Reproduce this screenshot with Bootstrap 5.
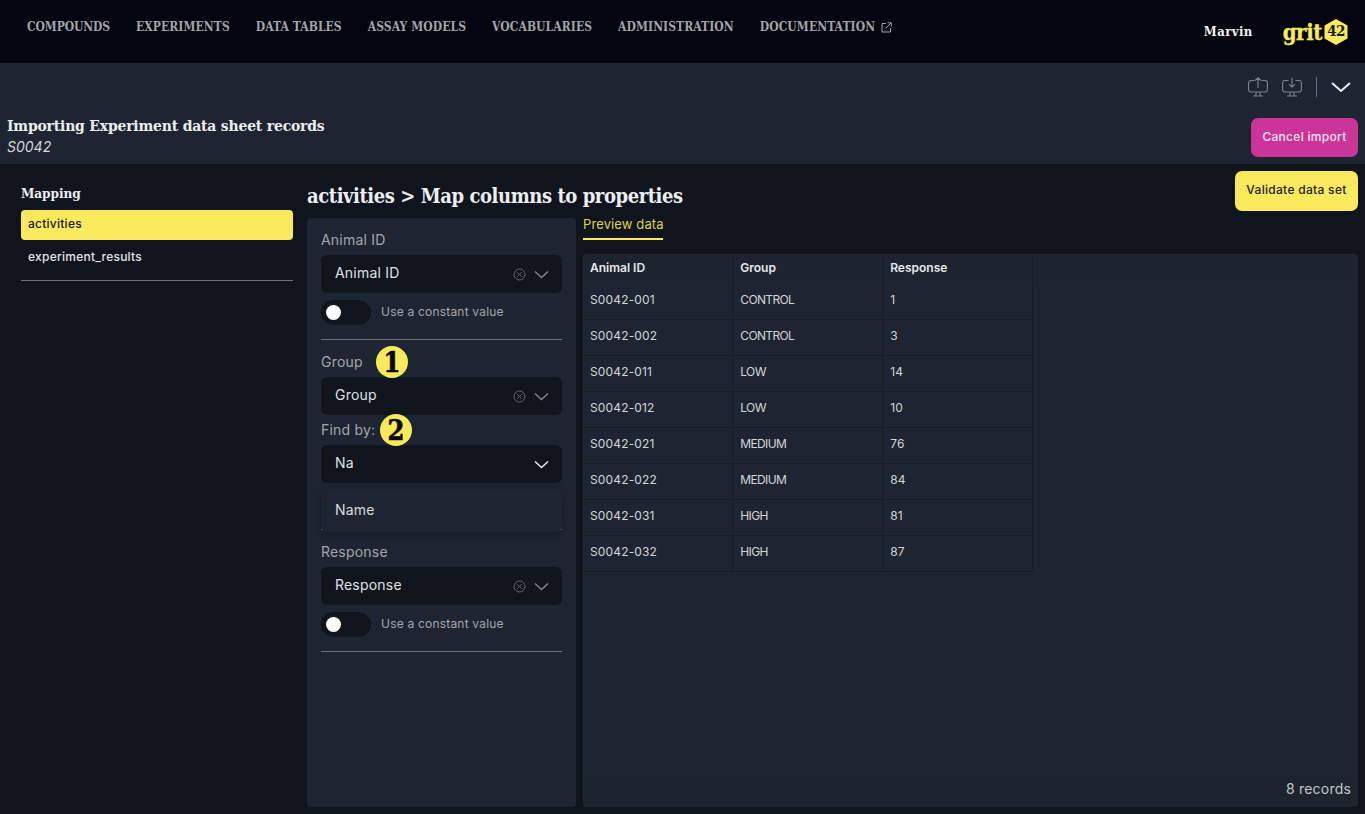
<!DOCTYPE html>
<html lang="en">
<head>
  <meta charset="UTF-8">
  <title>grit42 - Importing records</title>
  <link href="https://cdn.jsdelivr.net/npm/bootstrap@5.3.0/dist/css/bootstrap.min.css" rel="stylesheet">
  <style>
    html, body { height: 100%; }
    body {
      background: #10141c;
      color: #e6e8ec;
      font-family: "Inter", "Liberation Sans", sans-serif;
      font-size: 14px;
      overflow: hidden;
    }
    .serif-face { font-family: "DejaVu Serif", "Liberation Serif", serif; font-weight: 700; font-stretch: condensed; }

    /* top navigation */
    .top-bar { height: 63px; background: #03040f; padding: 0 17px 9px 27px; }
    .top-bar .nav { gap: 26px; }
    .top-link {
      color: #a3a4a8; font-size: 12px; letter-spacing: .08px; text-decoration: none;
      display: flex; align-items: center; gap: 6px;
    }
    .top-link:first-child { letter-spacing: -.1px; }
    .user-box { padding-top: 9px; }
    .user-name { color: #f2f2f2; font-size: 13px; letter-spacing: .4px; margin-right: 30px; }
    .brand-mark { display: flex; align-items: center; color: #f9e95c; }
    .brand-mark .grit-word { font-size: 22px; line-height: 1; letter-spacing: -.4px; margin-right: 2px; -webkit-text-stroke: .3px #f9e95c; }
    .brand-hex { position: relative; width: 24px; height: 26px; display: block; }
    .brand-hex svg { display: block; }
    .brand-hex span {
      position: absolute; inset: 0; display: flex; align-items: center; justify-content: center;
      color: #1a1c20; font-size: 15px; letter-spacing: -.6px;
    }

    /* page header */
    .page-head { height: 101px; background: #1e2532; padding: 0 7px 7px 7px; }
    .head-tools { height: 47px; padding-right: 7px; gap: 14px; }
    .head-sep { width: 1px; height: 20px; background: #6d7179; }
    .head-title { font-size: 15.500px; line-height: 20px; letter-spacing: -.18px; color: #eceef0; }
    .head-sub { font-size: 14px; line-height: 22px; font-style: italic; color: #d5d7db; }
    .head-text { padding-top: 6px; }
    .btn-cancel, .btn-cancel:hover {
      background: #cb3499; color: #f7e6f2; border: 0; border-radius: 7px; margin-top: 8px;
      font-size: 12px; font-weight: 500; letter-spacing: .3px; width: 107px; height: 39px; padding: 0 0 2px;
    }
    .btn-validate, .btn-validate:hover {
      background: #f9e95c; color: #1b1d21; border: 0; border-radius: 7px;
      font-size: 12px; font-weight: 500; letter-spacing: .3px; width: 123px; height: 40px; padding: 0 0 2px;
    }

    /* main area */
    .work-area { height: 650px; padding: 7px 7px 7px 21px; gap: 14px; }
    .side-col { width: 272px; flex: none; }
    .side-title { font-size: 13.500px; line-height: 20px; margin: 12px 0 7px; color: #eceef0; letter-spacing: -.1px; }
    .side-list .list-group-item {
      background: transparent; border: 0; color: #e2e4e8; font-size: 12px; font-weight: 500;
      padding: 0 7px; height: 30px; line-height: 30px; border-radius: 4px; letter-spacing: .25px;
    }
    .side-list .list-group-item.active { background: #f9e95c; color: #17191d; line-height: 28px; }
    .side-list .list-group-item + .list-group-item { margin-top: 2px; }
    .side-rule { border: 0; border-top: 1px solid #6d7179; opacity: 1; margin: 8px 0 0; }

    .main-col { min-width: 0; }
    .main-top { height: 47px; }
    .main-heading { font-size: 20px; line-height: 26px; letter-spacing: -.43px; margin: 12px 0 0; color: #eceef0; }
    .main-body { height: 589px; gap: 7px; margin-top: 0; }

    /* mapping form */
    .map-panel { width: 269px; flex: none; background: #1e2532; border-radius: 4px; padding: 14px; position: relative; }
    .map-label { font-size: 14px; line-height: 15px; height: 17px; color: #a2a5ab; margin-bottom: 6px; letter-spacing: .2px; position: relative; }
    .pick-box {
      height: 38px; background: #10141c; border-radius: 6px; padding: 0 13px 0 14px; color: #dfe1e5;
      letter-spacing: .2px; font-size: 14px;
    }
    .pick-box .pick-val { flex: 1; padding-bottom: 3px; }
    .switch-row { height: 25px; margin-top: 7px; gap: 10px; color: #a2a5ab; font-size: 12px; letter-spacing: .2px; }
    .switch-row .switch-text { padding-bottom: 2px; }
    .switch-track { width: 50px; height: 25px; background: #10141c; border-radius: 13px; padding: 5px 5px; }
    .switch-knob { width: 15px; height: 15px; background: #fff; border-radius: 50%; display: block; }
    .map-rule { border: 0; border-top: 1px solid #6d7179; opacity: 1; margin: 14px 0 14px; }
    .find-label { margin-top: 7px; }
    .step-dot {
      position: absolute; width: 32px; height: 32px; border-radius: 50%; background: #f9e95c; color: #0a0a0a;
      display: flex; align-items: center; justify-content: center; font-size: 27px; line-height: 1; top: -8px;
      letter-spacing: 0; -webkit-text-stroke: .6px #0a0a0a;
    }
    .pick-menu {
      position: absolute; left: 14px; right: 14px; top: 272px; height: 42px; background: #1e2532;
      border-radius: 6px; box-shadow: 0 2px 8px rgba(0,0,0,.3); padding: 0 14px 3px; display: flex; align-items: center;
      color: #d8dade; letter-spacing: .2px;
    }

    /* preview */
    .preview-col { min-width: 0; }
    .preview-tabs { height: 29px; margin-top: -7px; margin-bottom: 14px; }
    .preview-tab {
      color: #ddd04f; font-size: 13px; letter-spacing: .12px; line-height: 27px; padding: 0; height: 29px;
      border-bottom: 2px solid #f9e95c; text-decoration: none; display: block; width: 80px; white-space: nowrap;
    }
    .data-panel { background: #1e2532; border-radius: 4px; overflow: hidden; position: relative; }
    .data-wrap { flex: 1; }
    .data-grid { width: 450px; margin: 0; table-layout: fixed; --bs-table-bg: transparent; --bs-table-color: #d3d5d9; }
    .data-grid th, .data-grid td {
      height: 36px; padding: 0 7px; vertical-align: middle; font-size: 12px; letter-spacing: .15px;
      border-right: 1px solid #171c27; border-bottom: 1px solid #171c27; background: transparent; color: #d3d5d9;
    }
    .data-grid td { padding-bottom: 2px; }
    .data-grid td:nth-child(2) { letter-spacing: -.65px; }
    .data-grid th { height: 29px; font-weight: 600; letter-spacing: 0; color: #e6e8ec; background: #1c2430; border-bottom: 0; padding-bottom: 1px; }
    .head-fill { position: absolute; left: 450px; right: 0; top: 0; height: 29px; background: #1c2430; }
    .data-foot { height: 35px; background: #1c2430; padding: 0 7px 2px; color: #c4c6ca; font-size: 14px; letter-spacing: .2px; }
  </style>
</head>
<body>
  <!-- top nav -->
  <nav class="top-bar d-flex align-items-center justify-content-between">
    <div class="nav serif-face">
      <a class="top-link" href="#">COMPOUNDS</a>
      <a class="top-link" href="#">EXPERIMENTS</a>
      <a class="top-link" href="#">DATA TABLES</a>
      <a class="top-link" href="#">ASSAY MODELS</a>
      <a class="top-link" href="#">VOCABULARIES</a>
      <a class="top-link" href="#">ADMINISTRATION</a>
      <a class="top-link" href="#">DOCUMENTATION
        <svg width="11" height="11" viewBox="0 0 11 11" fill="none" stroke="#a3a4a8" stroke-width="1"><path d="M5 1.500H1v8.500h8.500V6M6.500.8h3.700v3.700M10 1 5 6"/></svg>
      </a>
    </div>
    <div class="user-box d-flex align-items-center">
      <span class="user-name serif-face">Marvin</span>
      <span class="brand-mark serif-face">
        <span class="grit-word">grit</span>
        <span class="brand-hex">
          <svg width="24" height="26" viewBox="0 0 24 26"><path d="M12 0 23.500 6.500v13L12 26 .5 19.500v-13z" fill="#f9e95c"/></svg>
          <span>42</span>
        </span>
      </span>
    </div>
  </nav>

  <!-- page header -->
  <header class="page-head">
    <div class="head-tools d-flex align-items-center justify-content-end">
      <svg width="20" height="20" viewBox="0 0 20 20" fill="none" stroke="#7e838b" stroke-width="1.100"><path d="M6.500 3.500H3Q.6 3.500.6 6v6.500Q.6 15 3 15h14q2.400 0 2.400-2.500V6q0-2.500-2.400-2.500h-3.500M10 11V.8M7 3.500 10 .8l3 2.700M8.300 15l-.6 3.500M11.700 15l.6 3.500M5 19h10"/></svg>
      <svg width="20" height="20" viewBox="0 0 20 20" fill="none" stroke="#7e838b" stroke-width="1.100"><path d="M6.500 3.500H3Q.6 3.500.6 6v6.500Q.6 15 3 15h14q2.400 0 2.400-2.500V6q0-2.500-2.400-2.500h-3.500M10 .8V10M7 7.300 10 10l3-2.700M8.300 15l-.6 3.500M11.700 15l.6 3.500M5 19h10"/></svg>
      <span class="head-sep"></span>
      <svg width="20" height="14" viewBox="0 0 20 14" fill="none" stroke="#eceef0" stroke-width="2"><path d="M1 3l9 8 9-8"/></svg>
    </div>
    <div class="d-flex justify-content-between align-items-start">
      <div class="head-text">
        <div class="head-title serif-face">Importing Experiment data sheet records</div>
        <div class="head-sub">S0042</div>
      </div>
      <button class="btn btn-cancel" type="button">Cancel import</button>
    </div>
  </header>

  <div class="work-area d-flex">
    <aside class="side-col">
      <div class="side-title serif-face">Mapping</div>
      <div class="list-group side-list">
        <a class="list-group-item active" href="#">activities</a>
        <a class="list-group-item" href="#">experiment_results</a>
      </div>
      <hr class="side-rule">
    </aside>

    <main class="main-col flex-grow-1 d-flex flex-column">
      <div class="main-top d-flex justify-content-between align-items-start">
        <h1 class="main-heading serif-face">activities &gt; Map columns to properties</h1>
        <button class="btn btn-validate" type="button">Validate data set</button>
      </div>
      <div class="main-body d-flex">
        <section class="map-panel">
          <div class="map-label">Animal ID</div>
          <div class="pick-box d-flex align-items-center">
            <span class="pick-val">Animal ID</span>
            <svg width="13" height="13" viewBox="0 0 13 13" fill="none" stroke="#666a72"><circle cx="6.500" cy="6.500" r="5.500"/><path d="M4.300 4.300l4.400 4.400M8.700 4.300l-4.400 4.400"/></svg>
            <svg class="ms-2" width="15" height="9" viewBox="0 0 15 9" fill="none" stroke="#80848b" stroke-width="1.500"><path d="M1 1.500l6.500 6 6.500-6"/></svg>
          </div>
          <div class="switch-row d-flex align-items-center">
            <span class="switch-track"><span class="switch-knob"></span></span>
            <span class="switch-text">Use a constant value</span>
          </div>
          <hr class="map-rule">

          <div class="map-label">Group<span class="step-dot serif-face" style="left:55px">1</span></div>
          <div class="pick-box d-flex align-items-center">
            <span class="pick-val">Group</span>
            <svg width="13" height="13" viewBox="0 0 13 13" fill="none" stroke="#666a72"><circle cx="6.500" cy="6.500" r="5.500"/><path d="M4.300 4.300l4.400 4.400M8.700 4.300l-4.400 4.400"/></svg>
            <svg class="ms-2" width="15" height="9" viewBox="0 0 15 9" fill="none" stroke="#80848b" stroke-width="1.500"><path d="M1 1.500l6.500 6 6.500-6"/></svg>
          </div>
          <div class="map-label find-label">Find by:<span class="step-dot serif-face" style="left:59px">2</span></div>
          <div class="pick-box d-flex align-items-center">
            <span class="pick-val">Na</span>
            <svg width="15" height="9" viewBox="0 0 15 9" fill="none" stroke="#e6e8ec" stroke-width="1.500"><path d="M1 1.500l6.500 6 6.500-6"/></svg>
          </div>
          <hr class="map-rule" style="margin-top:46px">

          <div class="map-label">Response</div>
          <div class="pick-box d-flex align-items-center">
            <span class="pick-val">Response</span>
            <svg width="13" height="13" viewBox="0 0 13 13" fill="none" stroke="#666a72"><circle cx="6.500" cy="6.500" r="5.500"/><path d="M4.300 4.300l4.400 4.400M8.700 4.300l-4.400 4.400"/></svg>
            <svg class="ms-2" width="15" height="9" viewBox="0 0 15 9" fill="none" stroke="#80848b" stroke-width="1.500"><path d="M1 1.500l6.500 6 6.500-6"/></svg>
          </div>
          <div class="switch-row d-flex align-items-center">
            <span class="switch-track"><span class="switch-knob"></span></span>
            <span class="switch-text">Use a constant value</span>
          </div>
          <hr class="map-rule">

          <div class="pick-menu">Name</div>
        </section>

        <section class="preview-col flex-grow-1 d-flex flex-column">
          <div class="preview-tabs"><a class="preview-tab" href="#">Preview data</a></div>
          <div class="data-panel flex-grow-1 d-flex flex-column">
            <div class="head-fill"></div>
            <div class="data-wrap">
              <table class="table data-grid">
                <thead><tr><th>Animal ID</th><th>Group</th><th>Response</th></tr></thead>
                <tbody id="rows"></tbody>
              </table>
            </div>
            <div class="data-foot d-flex align-items-center justify-content-end">8 records</div>
          </div>
        </section>
      </div>
    </main>
  </div>

  <script src="https://cdn.jsdelivr.net/npm/bootstrap@5.3.0/dist/js/bootstrap.bundle.min.js"></script>
  <script>
    const rows = [
      ['S0042-001', 'CONTROL', 1],
      ['S0042-002', 'CONTROL', 3],
      ['S0042-011', 'LOW', 14],
      ['S0042-012', 'LOW', 10],
      ['S0042-021', 'MEDIUM', 76],
      ['S0042-022', 'MEDIUM', 84],
      ['S0042-031', 'HIGH', 81],
      ['S0042-032', 'HIGH', 87]
    ];
    document.getElementById('rows').innerHTML = rows
      .map(r => `<tr>${r.map(c => `<td>${c}</td>`).join('')}</tr>`)
      .join('');
  </script>
</body>
</html>
